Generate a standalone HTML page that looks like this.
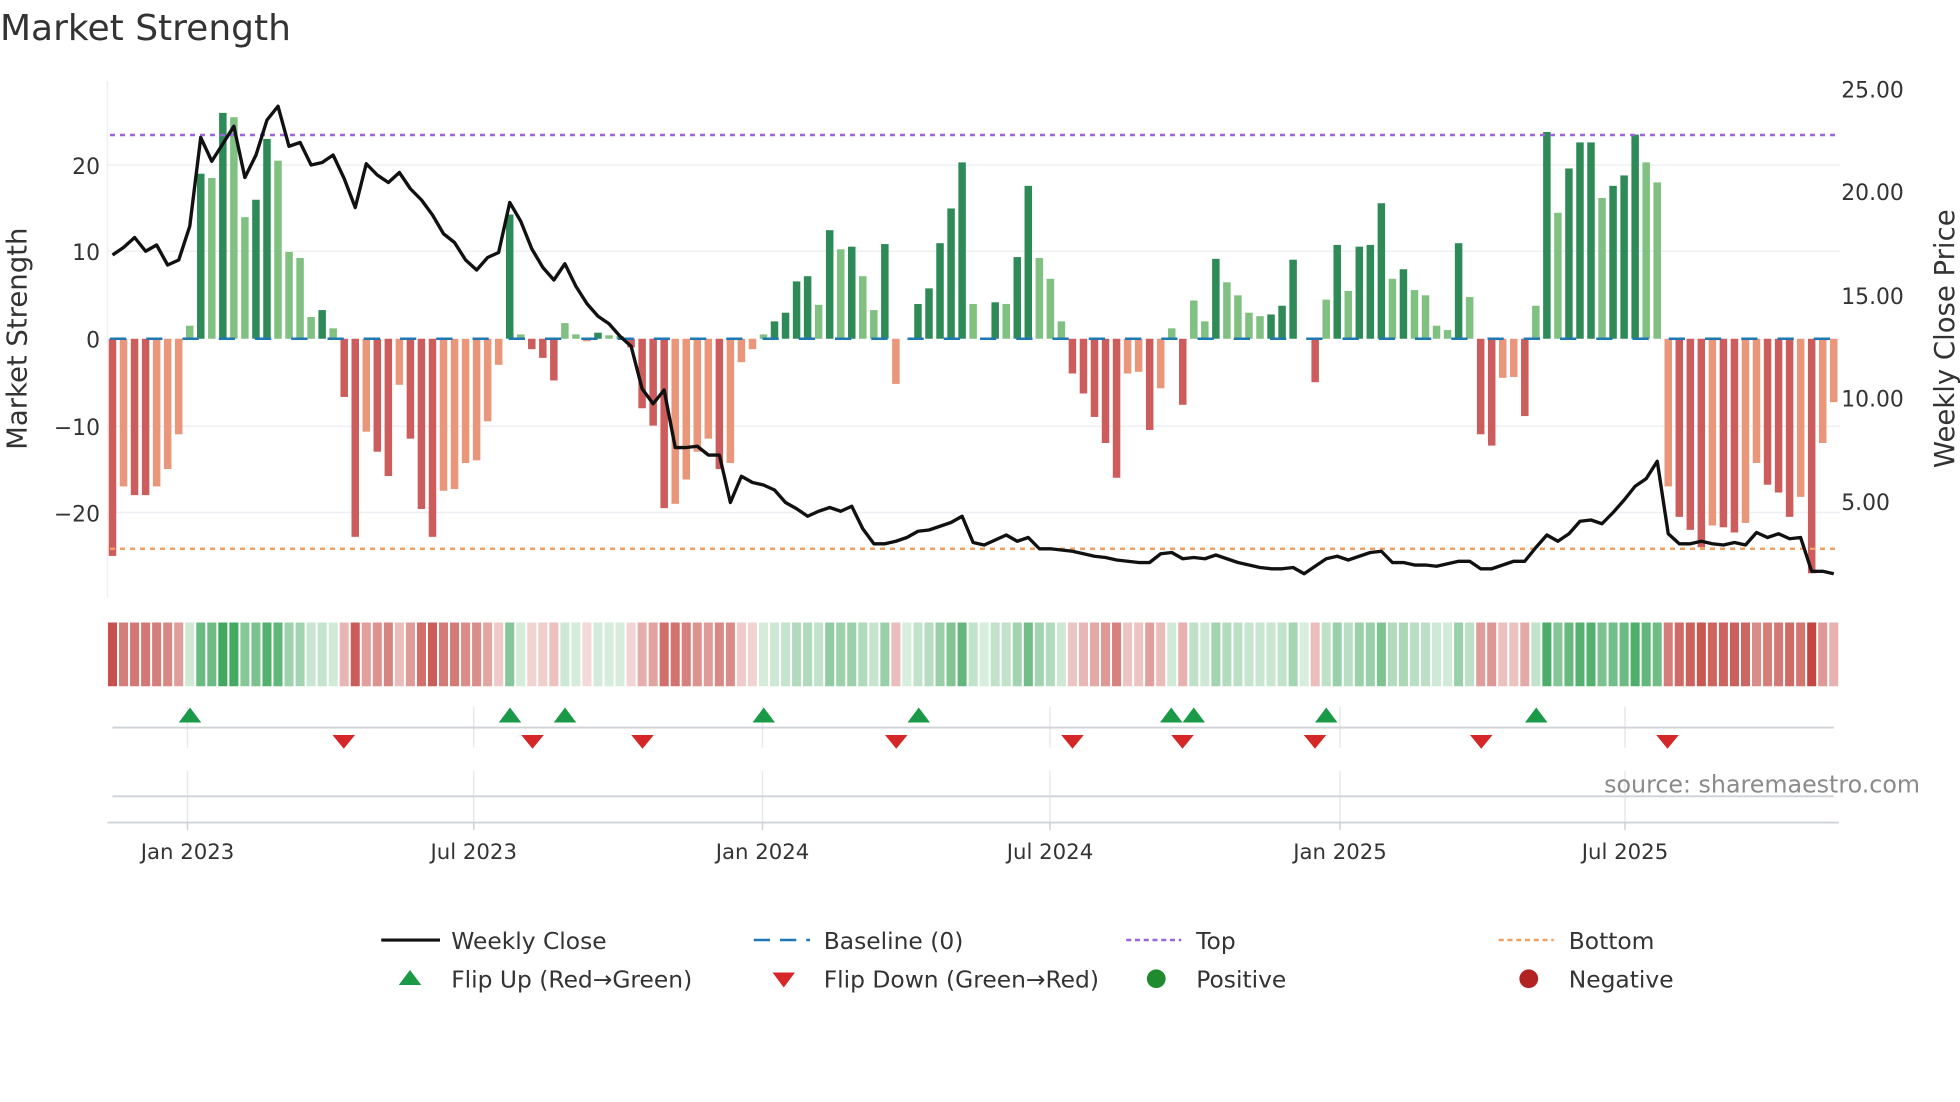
<!DOCTYPE html>
<html><head><meta charset="utf-8"><style>
html,body{margin:0;padding:0;background:#fff;}
svg{display:block;font-family:"DejaVu Sans","Liberation Sans",sans-serif;}
</style></head><body>
<svg id="s" width="1960" height="1102" viewBox="0 0 1568 881.6" xmlns="http://www.w3.org/2000/svg">
<rect width="1568" height="882" fill="#fff"/>
<text x="0" y="32" font-size="28.8" fill="#333">Market Strength</text>
<g stroke="#eef0f3" stroke-width="1.2">
<line x1="86" x2="1472" y1="132" y2="132"/><line x1="86" x2="1472" y1="201" y2="201"/>
<line x1="86" x2="1472" y1="341" y2="341"/><line x1="86" x2="1472" y1="410" y2="410"/>
<line x1="86" x2="86" y1="65" y2="478"/>
</g>
<g font-size="17.5" fill="#333" text-anchor="end">
<text x="80" y="139">20</text><text x="80" y="208">10</text><text x="80" y="278">0</text>
<text x="80" y="348">−10</text><text x="80" y="417">−20</text>
</g>
<g font-size="17.5" fill="#333">
<text x="1473" y="78">25.00</text><text x="1473" y="160">20.00</text><text x="1473" y="243">15.00</text>
<text x="1473" y="325">10.00</text><text x="1473" y="408">5.00</text>
</g>
<text transform="translate(21,271) rotate(-90)" font-size="22" fill="#333" text-anchor="middle">Market Strength</text>
<text transform="translate(1563,271) rotate(-90)" font-size="22" fill="#333" text-anchor="middle">Weekly Close Price</text>
<g id="bars"></g>
<line x1="88" x2="1470" y1="271" y2="271" stroke="#1f77b4" stroke-width="2" stroke-dasharray="13,16"/>
<line x1="88" x2="1470" y1="108" y2="108" stroke="#9a66d8" stroke-width="2" stroke-dasharray="4,4"/>
<line x1="88" x2="1470" y1="439" y2="439" stroke="#f0a060" stroke-width="2" stroke-dasharray="4,4"/>
<polyline id="price" fill="none" stroke="#111" stroke-width="2.7" stroke-linejoin="round"/>
<g id="heat"></g>
<g stroke="#e6e8eb" stroke-width="1.2">
<line x1="150" x2="150" y1="565" y2="598"/><line x1="379" x2="379" y1="565" y2="598"/><line x1="610" x2="610" y1="565" y2="598"/><line x1="840" x2="840" y1="565" y2="598"/><line x1="1072" x2="1072" y1="565" y2="598"/><line x1="1300" x2="1300" y1="565" y2="598"/>
<line x1="150" x2="150" y1="617" y2="660"/><line x1="379" x2="379" y1="617" y2="660"/><line x1="610" x2="610" y1="617" y2="660"/><line x1="840" x2="840" y1="617" y2="660"/><line x1="1072" x2="1072" y1="617" y2="660"/><line x1="1300" x2="1300" y1="617" y2="660"/>
</g>
<line x1="90" x2="1467" y1="582" y2="582" stroke="#cfd2d6" stroke-width="1.5"/>
<line x1="90" x2="1467" y1="637" y2="637" stroke="#cfd2d6" stroke-width="1.5"/>
<line x1="86" x2="1471" y1="658" y2="658" stroke="#cfd2d6" stroke-width="1.5"/>
<g stroke="#cfd2d6" stroke-width="1.2"><line x1="150" x2="150" y1="658" y2="664"/><line x1="379" x2="379" y1="658" y2="664"/><line x1="610" x2="610" y1="658" y2="664"/><line x1="840" x2="840" y1="658" y2="664"/><line x1="1072" x2="1072" y1="658" y2="664"/><line x1="1300" x2="1300" y1="658" y2="664"/></g>
<g id="marks"></g>
<g font-size="17" fill="#333" text-anchor="middle">
<text x="150" y="687">Jan 2023</text><text x="379" y="687">Jul 2023</text><text x="610" y="687">Jan 2024</text>
<text x="840" y="687">Jul 2024</text><text x="1072" y="687">Jan 2025</text><text x="1300" y="687">Jul 2025</text>
</g>
<text x="1536" y="634" font-size="19" fill="#8a8a8a" text-anchor="end">source: sharemaestro.com</text>
<g font-size="18.7" fill="#333">
<line x1="305" x2="352" y1="752" y2="752" stroke="#111" stroke-width="2.5"/>
<text x="361" y="759">Weekly Close</text>
<line x1="603" x2="648" y1="752" y2="752" stroke="#1f77b4" stroke-width="2" stroke-dasharray="13,8"/>
<text x="659" y="759">Baseline (0)</text>
<line x1="901" x2="945" y1="752" y2="752" stroke="#9a66d8" stroke-width="2" stroke-dasharray="4,3"/>
<text x="957" y="759">Top</text>
<line x1="1199" x2="1243" y1="752" y2="752" stroke="#f0a060" stroke-width="2" stroke-dasharray="4,3"/>
<text x="1255" y="759">Bottom</text>
<polygon points="319,788 337,788 328,776" fill="#1a9a46"/>
<text x="361" y="790">Flip Up (Red→Green)</text>
<polygon points="618,778 636,778 627,790" fill="#d62728"/>
<text x="659" y="790">Flip Down (Green→Red)</text>
<circle cx="925" cy="783" r="7.5" fill="#1f8a2e"/>
<text x="957" y="790">Positive</text>
<circle cx="1223" cy="783" r="7.5" fill="#b22222"/>
<text x="1255" y="790">Negative</text>
</g>
</svg>
<script>
var V=[-25,-17,-18,-18,-17,-15,-11,1.5,19,18.5,26,25.5,14,16,23,20.5,10,9.3,2.5,3.3,1.2,-6.7,-22.8,-10.7,-13,-15.8,-5.3,-11.5,-19.6,-22.8,-17.5,-17.3,-14.3,-14,-9.5,-3,14.3,0.5,-1.2,-2.2,-4.8,1.8,0.5,-0.3,0.7,0.4,0.3,-1,-8,-10,-19.5,-19,-16.2,-13,-11.5,-15,-14.3,-2.7,-1.2,0.5,2,3,6.6,7.2,3.9,12.5,10.3,10.6,7.2,3.3,10.9,-5.2,0.1,4,5.8,11,15,20.3,4,0.1,4.2,4,9.4,17.6,9.3,6.9,2,-4,-6.3,-9,-12,-16,-4,-3.8,-10.5,-5.7,1.2,-7.6,4.4,2,9.2,6.5,5,3,2.6,2.8,3.8,9.1,0.1,-5,4.5,10.8,5.5,10.6,10.8,15.6,6.9,8,5.6,5,1.5,1,11,4.8,-11,-12.3,-4.5,-4.4,-8.9,3.8,23.8,14.5,19.6,22.6,22.6,16.2,17.6,18.8,23.5,20.3,18,-17,-20.5,-22,-24,-21.5,-21.7,-22.3,-21.2,-14.3,-16.8,-17.7,-20.5,-18.2,-27,-12,-7.3];
var P=[204,198,190,201,196,212,208,181,110,129,115,101,142,124,96,85,117,114,132,130,124,143,166,131,140,146,138,151,160,172,187,194,208,216,206,202,162,177,199,214,224,211,229,243,253,259,269,277,311,323,312,358,358,357,364,364,402,381,386,388,392,402,407,413,409,406,409,405,423,435,435,433,430,425,424,421,418,413,434,436,432,428,433,430,439,439,440,441,443,445,446,448,449,450,450,443,442,447,446,447,444,447,450,452,454,455,455,454,459,453,447,445,448,445,442,441,450,450,452,452,453,451,449,449,455,455,452,449,449,438,428,433,427,417,416,419,410,400,389,383,369,427,435,435,433,435,436,434,436,426,430,427,431,430,457,457,459];
var n=V.length,st=(1467-90)/(n-1),ns="http://www.w3.org/2000/svg";
function el(g,t,a){var e=document.createElementNS(ns,t);for(var k in a)e.setAttribute(k,a[k]);document.getElementById(g).appendChild(e);}
var pts=[];
for(var i=0;i<n;i++){var x=90+i*st,v=V[i],pv=i?Math.abs(V[i-1]):0,dark=Math.abs(v)>=pv;
var h=Math.abs(v)*6.95,y=v>=0?271-h:271;
var c=v>=0?(dark?"#2e8b57":"#80c080"):(dark?"#cd5c5c":"#e9967a");
if(Math.abs(v)>0.2)el("bars","rect",{x:x-3,y:y,width:6,height:h,fill:c});
var a=Math.min(1,0.2+Math.abs(v)/27*0.8);
var hc=v>=0?"rgba(60,165,90,"+a+")":"rgba(195,70,65,"+a+")";
el("heat","rect",{x:x-st/2+0.8,y:498,width:st-1.6,height:51,fill:hc});
pts.push(x.toFixed(1)+","+P[i]);}
document.getElementById("price").setAttribute("points",pts.join(" "));
[152,408,452,611,735,937,955,1061,1229].forEach(function(x){el("marks","polygon",{points:(x-9)+",578 "+(x+9)+",578 "+x+",566",fill:"#1a9a46"});});
[275,426,514,717,858,946,1052,1185,1334].forEach(function(x){el("marks","polygon",{points:(x-9)+",588 "+(x+9)+",588 "+x+",599",fill:"#d62728"});});
</script>
</body></html>
